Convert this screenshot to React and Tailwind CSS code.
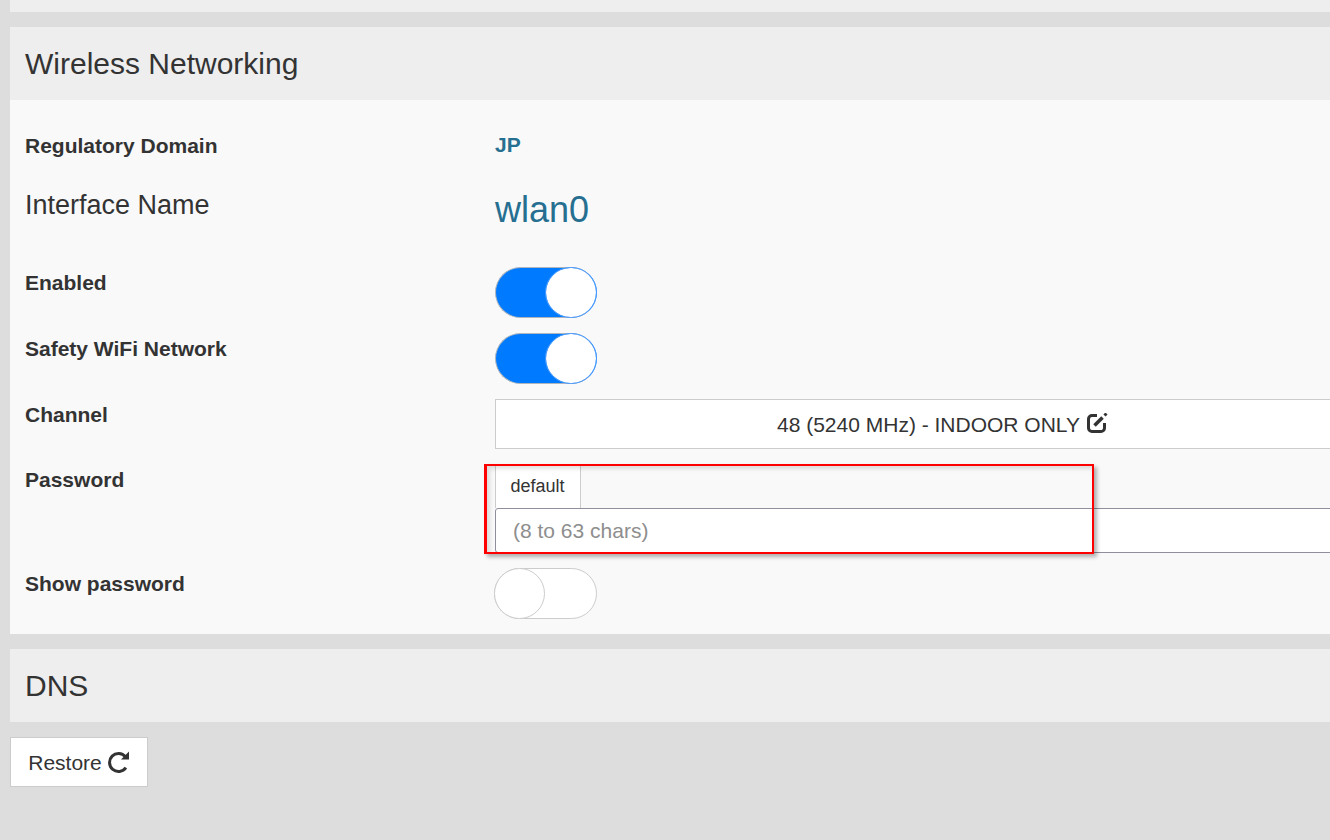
function Toggle({ on }) {
  if (on) {
    return (
      <div className="flex justify-end w-[102px] h-[51px] rounded-full bg-[#007bff] border border-[#adb5bd] border-r-[#4a9bff]">
        <div className="w-[50px] h-[49px] rounded-full bg-white outline outline-[#4a9bff]" />
      </div>
    )
  }
  return (
    <div className="flex w-[103px] h-[51px] rounded-full bg-white border border-[#ccc]">
      <div className="w-[51px] h-[51px] -my-px -ml-px rounded-full bg-white border border-[#ccc]" />
    </div>
  )
}

function Row({ label, children, className = 'font-bold text-[21px] leading-[30px] pt-px', gap = 'mb-[15px]' }) {
  return (
    <div className={`flex ${gap}`}>
      <div className={`w-[470px] shrink-0 ${className}`}>{label}</div>
      <div className="flex-1">{children}</div>
    </div>
  )
}

function PanelHead({ title }) {
  return (
    <div className="h-[73px] flex items-center px-[15px] bg-[#eee] text-[30px]">{title}</div>
  )
}

function EditIcon({ className }) {
  return (
    <svg viewBox="0 0 22 20" fill="none" stroke="currentColor" className={className}>
      <path strokeWidth="3" d="M11 2.500H6A3.500 3.500 0 0 0 2.500 6v9A3.500 3.500 0 0 0 6 18.500h9a3.500 3.500 0 0 0 3.500-3.500v-5" />
      <path strokeWidth="3.500" d="M8.500 12.500L16.500 4.500" />
      <path strokeWidth="3" d="M18.500 2.500L20.500 0.500" />
    </svg>
  )
}

function RestoreIcon({ className }) {
  return (
    <svg viewBox="0 0 22 24" fill="none" className={className}>
      <path stroke="currentColor" strokeWidth="3" d="M17.400 6.700A9 9 0 1 0 17.900 17.700" />
      <path fill="currentColor" d="M21 1.500V9.500H13Z" />
    </svg>
  )
}

export default function App() {
  return (
    <div className="relative w-[1330px] h-[840px] overflow-hidden bg-[#ddd] text-[#333] font-['Liberation_Sans',Arial,sans-serif]">
      <div className="w-[1420px] ml-[10px]">
        <div className="h-[12px] bg-[#eee] mb-[15px]" />

        <div className="mb-[15px]">
          <PanelHead title="Wireless Networking" />
          <div className="bg-[#f9f9f9] px-[15px] pt-[30px] h-[534px]">
            <Row label="Regulatory Domain">
              <div className="font-bold text-[21px] leading-[30px] text-[#266f91]">JP</div>
            </Row>
            <div className="h-[15px]" />
            <Row label="Interface Name" className="text-[27px] leading-[28px]">
              <div className="text-[36px] leading-[38px] text-[#266f91] mb-[23px]">wlan0</div>
            </Row>
            <Row label="Enabled"><Toggle on /></Row>
            <Row label="Safety WiFi Network"><Toggle on /></Row>
            <Row label="Channel" gap="mb-[16px]">
              <div className="w-[895px] h-[50px] flex items-center justify-center gap-[6px] bg-white border border-[#ccc] text-[21px]">
                <span className="pt-px">48 (5240 MHz) - INDOOR ONLY</span>
                <EditIcon className="w-[22px] h-[20px] mb-[2px]" />
              </div>
            </Row>
            <Row label="Password" className="font-bold text-[21px] leading-[30px]">
              <div className="w-[895px]">
                <div className="w-[86px] h-[43px] flex items-center justify-center pr-px pb-[2px] bg-white border border-b-0 border-[#ccc] text-[18px]">default</div>
                <div className="h-[45px] flex items-center px-[17px] pt-px bg-white border border-[#8f8f9d] rounded-[3px] text-[21px] text-[#8e8e8e]">(8 to 63 chars)</div>
              </div>
            </Row>
            <div className="-ml-px">
              <Row label="Show password" className="font-bold text-[21px] leading-[30px] pt-px pl-px"><Toggle /></Row>
            </div>
          </div>
        </div>

        <div className="mb-[15px]">
          <PanelHead title="DNS" />
        </div>

        <button className="w-[138px] h-[50px] flex items-center justify-center gap-[6px] pt-px bg-white border border-[#ccc] text-[21px]">
          Restore
          <RestoreIcon className="w-[22px] h-[24px] mb-[2px]" />
        </button>
      </div>

      {/* red annotation box drawn over the password field */}
      <div className="absolute left-[484px] top-[464px] w-[610px] h-[90px] border-2 border-l-[3px] border-[#f00] shadow-[3px_3px_4px_rgba(0,0,0,0.3),inset_3px_3px_4px_rgba(0,0,0,0.12)]" />
    </div>
  )
}
